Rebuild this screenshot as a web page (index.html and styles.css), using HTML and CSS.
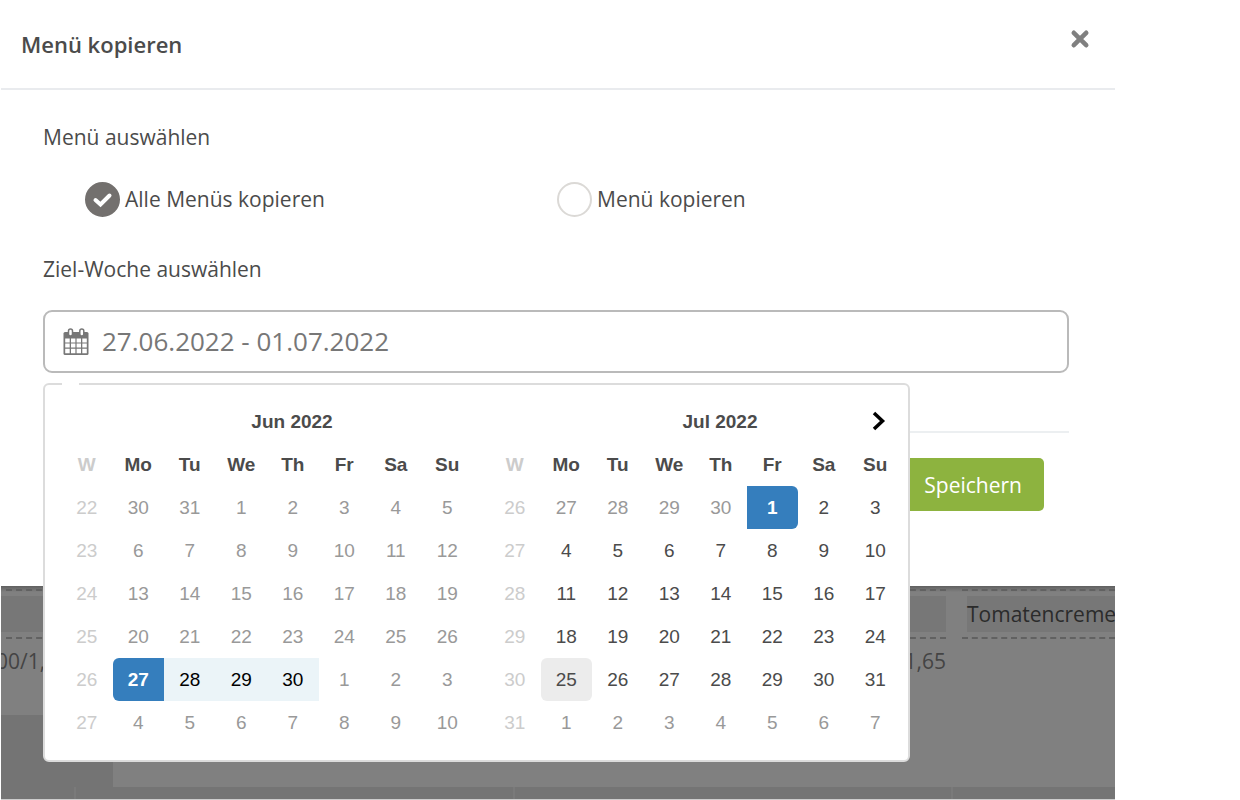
FILE: index.html
```html
<!DOCTYPE html>
<html lang="de">
<head>
<meta charset="utf-8">
<title>Menü kopieren</title>
<link rel="stylesheet" href="styles.css">
</head>
<body>
<div class="screen">
  <section class="modal" role="dialog" aria-labelledby="modal-title">
    <header class="modal-header">
      <h1 class="modal-title" id="modal-title">Menü kopieren</h1>
      <button class="close" type="button" aria-label="Schließen">
        <svg width="20" height="20" viewBox="0 0 20 20"><path d="M3.800 3.800 16.200 16.200M16.200 3.800 3.800 16.200" fill="none" stroke="#808080" stroke-width="4.600" stroke-linecap="round"/></svg>
      </button>
    </header>
    <form class="modal-body">
      <p class="label" id="menu-label">Menü auswählen</p>
      <div class="choices" role="radiogroup" aria-labelledby="menu-label">
        <label class="choice">
          <input class="radio" type="radio" name="menu" checked>
          <svg class="tick" width="35" height="35" viewBox="0 0 35 35"><path d="M10.500 18 15.500 22.500 24.500 13.500" fill="none" stroke="#fff" stroke-width="4" stroke-linecap="round" stroke-linejoin="miter"/></svg>
          <span>Alle Menüs kopieren</span>
        </label>
        <label class="choice">
          <input class="radio" type="radio" name="menu">
          <span>Menü kopieren</span>
        </label>
      </div>
      <label class="label week-label" for="week">Ziel-Woche auswählen</label>
      <div class="field">
        <svg class="calendar-icon" width="26" height="28" viewBox="0 0 26 28">
          <path d="M2 4H24Q25.500 4 25.500 5.500V25.500Q25.500 27 24 27H2Q.5 27 .5 25.500V5.500Q.5 4 2 4Z" fill="#777"/>
          <path d="M2.200 10.500H6.700V14.400H2.200ZM8 10.500H12.400V14.400H8ZM13.600 10.500H18V14.400H13.600ZM19.300 10.500H23.800V14.400H19.300ZM2.200 15.500H6.700V19.500H2.200ZM8 15.500H12.400V19.500H8ZM13.600 15.500H18V19.500H13.600ZM19.300 15.500H23.800V19.500H19.300ZM2.200 20.700H6.700V25.300H2.200ZM8 20.700H12.400V25.300H8ZM13.600 20.700H18V25.300H13.600ZM19.300 20.700H23.800V25.300H19.300Z" fill="#fff"/>
          <rect x="5.500" y="1" width="4" height="7" rx="2" fill="#fff" stroke="#777" stroke-width="1.500"/>
          <rect x="16.800" y="1" width="4" height="7" rx="2" fill="#fff" stroke="#777" stroke-width="1.500"/>
        </svg>
        <input class="week-input" id="week" type="text" value="27.06.2022 - 01.07.2022">
        <div class="picker">
          <table class="month" id="june"></table>
          <table class="month" id="july"></table>
          <button class="next" type="button" aria-label="Nächster Monat">
            <svg width="14" height="20" viewBox="0 0 14 20"><path d="M2 2 10.500 10 2 18" fill="none" stroke="#000" stroke-width="3.500"/></svg>
          </button>
        </div>
      </div>
      <footer class="actions">
        <button class="save" type="submit">Speichern</button>
      </footer>
    </form>
  </section>
  <div class="plan">
    <div class="plan-rows">
      <div class="plan-column first">
        <div class="dish"><span class="dish-name"></span></div>
        <div class="prices"><span class="price-start">00/1,</span><span>1,65</span></div>
      </div>
      <div class="plan-column">
        <div class="dish"><span class="dish-name">Tomatencreme</span></div>
      </div>
    </div>
    <div class="plan-side"></div>
    <div class="plan-footer"><i></i><i></i><i></i><i></i></div>
  </div>
</div>
<script src="picker.js"></script>
</body>
</html>
```

FILE: styles.css
```css
* { box-sizing: border-box; }

body {
  margin: 0;
  background: #fff;
  color: #4b4b4b;
  font-family: "Open Sans", "Noto Sans", sans-serif;
  font-size: 21px;
  line-height: 30px;
}

button, input { font: inherit; color: inherit; }
button { border: 0; padding: 0; background: none; cursor: pointer; }
svg { display: block; }

.screen { margin: 0 125px 0 1px; }

.modal { position: relative; z-index: 1; background: #fff; }

.modal-header {
  display: flex;
  justify-content: space-between;
  align-items: center;
  padding: 29px 25px 29px 20px;
  border-bottom: 2px solid #e9ebee;
}
.modal-title { margin: 0; font-size: 22px; font-weight: 600; line-height: 30px; }
.close { align-self: flex-start; }

.modal-body { padding: 32px 46px 75px 42px; }
.label { display: block; margin: 0; }
.week-label { margin-top: 37px; }

.choices {
  display: grid;
  grid-template-columns: 1fr 1fr;
  margin-top: 30px;
  padding: 0 40px 0 42px;
}
.choice { position: relative; display: flex; gap: 5px; line-height: 34px; }
.radio {
  appearance: none;
  width: 35px;
  height: 35px;
  margin: 0;
  border: 2px solid #dbd9d6;
  border-radius: 50%;
  background: #fff;
}
.radio:checked { border-color: #73706e; background: #73706e; }
.tick { position: absolute; left: 0; top: 0; }

.field {
  position: relative;
  display: flex;
  align-items: center;
  gap: 13px;
  height: 63px;
  margin-top: 26px;
  padding: 0 18px;
  border: 2px solid #bababa;
  border-radius: 9px;
}
.week-input {
  flex: 1;
  min-width: 0;
  padding: 0 0 2px;
  border: 0;
  outline: 0;
  background: none;
  color: #777;
  font-size: 26px;
}

.picker {
  position: absolute;
  left: -2px;
  top: 71px;
  display: flex;
  gap: 16px;
  padding: 15px 7px 16px 16px;
  border: 2px solid #dcdcdc;
  border-radius: 6px;
  background: #fff;
  font-family: "Liberation Sans", Arial, sans-serif;
}
.picker::before {
  content: "";
  position: absolute;
  left: 17px;
  top: -2px;
  width: 17px;
  height: 2px;
  background: #fff;
}
.month {
  width: 412px;
  table-layout: fixed;
  border-collapse: collapse;
  font-size: 19px;
  line-height: 43px;
  text-align: center;
}
.month caption { font-weight: bold; padding-left: 50px; }
.month td, .month th { height: 43px; padding: 0; }
.month .week { color: #ccc; }
.day { display: block; width: 100%; height: 43px; }
.day.muted { color: #999; }
.day.range { background: #ebf4f8; color: #000; }
.day.today { border-radius: 6px; background: #ececec; }
.day.start, .day.end { background: #357ebd; color: #fff; font-weight: bold; }
.day.start { border-radius: 6px 0 0 6px; }
.day.end { border-radius: 0 6px 6px 0; }
.next { position: absolute; right: 22px; top: 26px; }

.actions {
  display: flex;
  justify-content: flex-end;
  margin-top: 58px;
  padding: 25px 25px 0 0;
  border-top: 2px solid #eceff1;
}
.save {
  height: 53px;
  padding: 0 22px;
  border-radius: 5px;
  background: #8db33f;
  color: #fff;
}

.plan {
  display: grid;
  grid-template-columns: 112px 1fr;
  overflow: hidden;
  background: linear-gradient(#606060, #808080 6px);
  border-bottom: 1px solid #ccc;
}
.plan-rows {
  grid-column: 1 / -1;
  display: grid;
  grid-template-columns: 1fr 153px;
  gap: 16px;
  height: 129px;
  padding-top: 3px;
}
.plan-column { min-width: 0; }
.dish {
  padding: 5px 0 5px 5px;
  border-top: 2px dashed #616161;
  border-bottom: 2px dashed #616161;
  color: #2b2b2b;
}
.first .dish { margin-left: 5px; padding-left: 0; }
.first .dish-name { margin-left: -5px; }
.dish-name { display: block; height: 36px; background: #777; line-height: 36px; }
.prices { display: flex; justify-content: space-between; padding-top: 7px; color: #444; }
.price-start { margin-left: -5px; }
.plan-side { height: 72px; background: #747474; }
.plan-footer {
  grid-column: 1 / -1;
  display: grid;
  grid-template-columns: 73px 1fr 1fr 164px;
  height: 12px;
  background: #747474;
}
.plan-footer i + i { border-left: 2px solid #7a7a7a; }
```

FILE: picker.js
```js
const weekdays = ["W", "Mo", "Tu", "We", "Th", "Fr", "Sa", "Su"];

// first: first date shown, firstWeek: number of the first week row
const months = [
  { id: "june", title: "Jun 2022", month: 5, first: new Date(2022, 4, 30), firstWeek: 22 },
  { id: "july", title: "Jul 2022", month: 6, first: new Date(2022, 5, 27), firstWeek: 26 }
];

function dayClass(date, month) {
  const day = date.getDate();
  if (date.getMonth() !== month) return "day muted";
  if (month === 5 && day === 27) return "day start";
  if (month === 5 && day > 27) return "day range";
  if (month === 6 && day === 1) return "day end";
  if (month === 6 && day === 25) return "day today";
  return month === 5 ? "day muted" : "day";
}

for (const m of months) {
  let html = `<caption>${m.title}</caption><thead><tr>`;
  html += weekdays.map((d, i) => `<th${i ? "" : ' class="week"'}>${d}</th>`).join("");
  html += "</tr></thead><tbody>";
  const date = new Date(m.first);
  for (let row = 0; row < 6; row++) {
    html += `<tr><td class="week">${m.firstWeek + row}</td>`;
    for (let col = 0; col < 7; col++) {
      html += `<td><button type="button" class="${dayClass(date, m.month)}">${date.getDate()}</button></td>`;
      date.setDate(date.getDate() + 1);
    }
    html += "</tr>";
  }
  document.getElementById(m.id).innerHTML = html + "</tbody>";
}
```
